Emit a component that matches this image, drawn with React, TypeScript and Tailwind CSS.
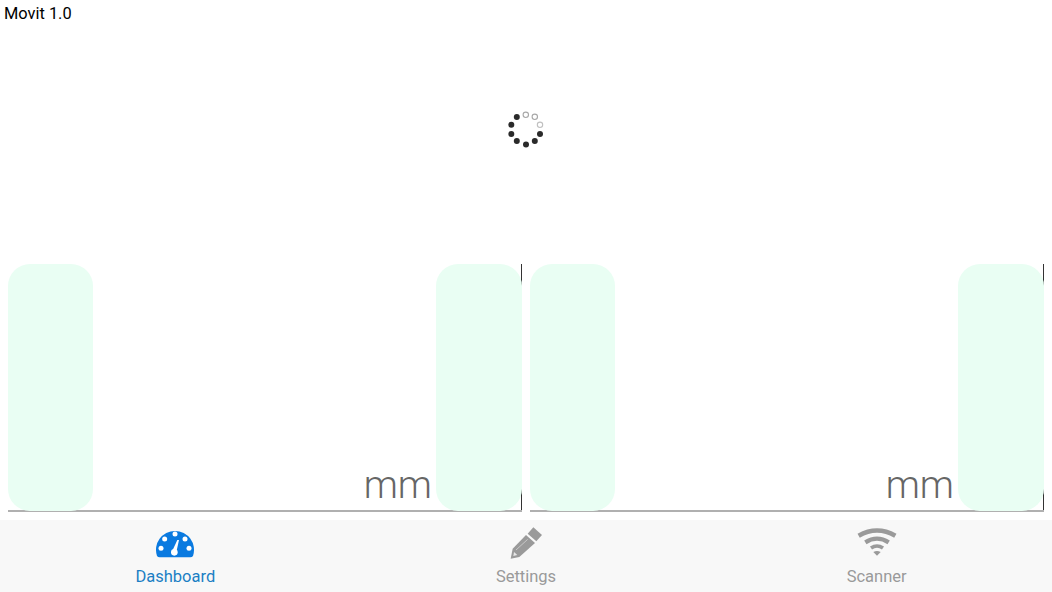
import React from "react";

const dots = [
  { x: 526, y: 144.6 }, { x: 534.8, y: 141 }, { x: 540, y: 134 },
  { x: 516.8, y: 141 }, { x: 511.3, y: 134 }, { x: 511.3, y: 124.8 }, { x: 516.8, y: 117 },
];
const rings = [
  { x: 525.8, y: 114.8, c: "#a8a8a8" }, { x: 534.8, y: 116.8, c: "#a8a8a8" }, { x: 540, y: 124.8, c: "#c0c0c0" },
];

function Spinner() {
  return (
    <svg width="40" height="40" viewBox="506 110 40 40">
      {dots.map((d, i) => <circle key={i} cx={d.x} cy={d.y} r="3" fill="#2a2a2a" />)}
      {rings.map((d, i) => <circle key={i} cx={d.x} cy={d.y} r="2.7" fill="none" stroke={d.c} strokeWidth="1.1" />)}
    </svg>
  );
}

function DashboardIcon() {
  return (
    <svg width="40" height="36" viewBox="106 21 120 108">
      <path d="M120 112 Q115 112 112 108 A57 57 0 1 1 220 108 Q217 112 212 112 Z" fill="#0a7ae0" />
      {[[166, 42], [135, 57], [196, 57], [124, 85], [208, 85]].map(([x, y]) => (
        <circle key={x} cx={x} cy={y} r="7.5" fill="#ffffff" />
      ))}
      <path d="M158 92 L170 96 L178 60 L173 60 Z" fill="#ffffff" />
      <circle cx="164" cy="97" r="10" fill="#ffffff" />
    </svg>
  );
}

function PencilIcon() {
  return (
    <svg width="40" height="36" viewBox="78 21 120 108">
      <path d="M160 22 L186 45 L169 64 L143 41 Z" fill="#9a9a9a" />
      <path d="M138 45 L165 69 L118 111 L92 116 L98 86 Z" fill="#9a9a9a" />
      <path d="M108 90 L143 58" stroke="#c8c8c8" strokeWidth="3" fill="none" />
      <path d="M102 96 L112 105 L100 108 Z" fill="#e8e8e8" />
    </svg>
  );
}

function WifiIcon() {
  return (
    <svg width="40" height="36" viewBox="80 21 120 108">
      <path d="M85 47 Q140 16 195 47" stroke="#9a9a9a" strokeWidth="14" fill="none" />
      <path d="M105 67 Q140 45 175 67" stroke="#9a9a9a" strokeWidth="13" fill="none" />
      <path d="M122 84 Q140 72 158 84" stroke="#9a9a9a" strokeWidth="11" fill="none" />
      <path d="M129 96 Q140 90 151 96 L140 107 Z" fill="#9a9a9a" />
    </svg>
  );
}

function Panel() {
  return (
    <div className="relative flex-1 h-[248px] border-b-2 border-b-[#b0b0b0] flex items-end justify-end">
      <div className="absolute right-0 top-0 bottom-0 w-px bg-[#333333]" />
      <span className="mr-[90px] mb-[5px] text-[38.5px] leading-[40px] font-light text-[#666666] font-['Roboto',sans-serif]">mm</span>
      <div className="absolute left-0 top-0 -bottom-[1px] w-[85px] rounded-[22px] bg-[#e9fef3]" />
      <div className="absolute right-0 top-0 -bottom-[1px] w-[86px] rounded-[22px] bg-[#e9fef3]" />
    </div>
  );
}

function Tab({ icon, label, active }: { icon: React.ReactNode; label: string; active?: boolean }) {
  return (
    <div className="flex-1 flex flex-col items-center pt-[7px]">
      <div className="h-[36px] flex items-center justify-center">{icon}</div>
      <span className={`mt-[4px] text-[16.5px] leading-[20px] font-['Roboto',sans-serif] ${active ? "text-[#1b7fc4]" : "text-[#9a9a9a]"}`}>{label}</span>
    </div>
  );
}

export default function App() {
  return (
    <div className="w-[1052px] h-[592px] bg-white flex flex-col overflow-hidden font-['Roboto',sans-serif]">
      <div className="h-[26px] pl-[4px] text-[16.4px] leading-[28px] text-black">Movit 1.0</div>
      <div className="h-[238px] pb-[30px] flex items-center justify-center">
        <Spinner />
      </div>
      <div className="flex gap-2 px-2">
        <Panel />
        <Panel />
      </div>
      <div className="mt-auto h-[72px] bg-[#f8f8f8] flex">
        <Tab active label="Dashboard" icon={<DashboardIcon />} />
        <Tab label="Settings" icon={<PencilIcon />} />
        <Tab label="Scanner" icon={<WifiIcon />} />
      </div>
    </div>
  );
}
